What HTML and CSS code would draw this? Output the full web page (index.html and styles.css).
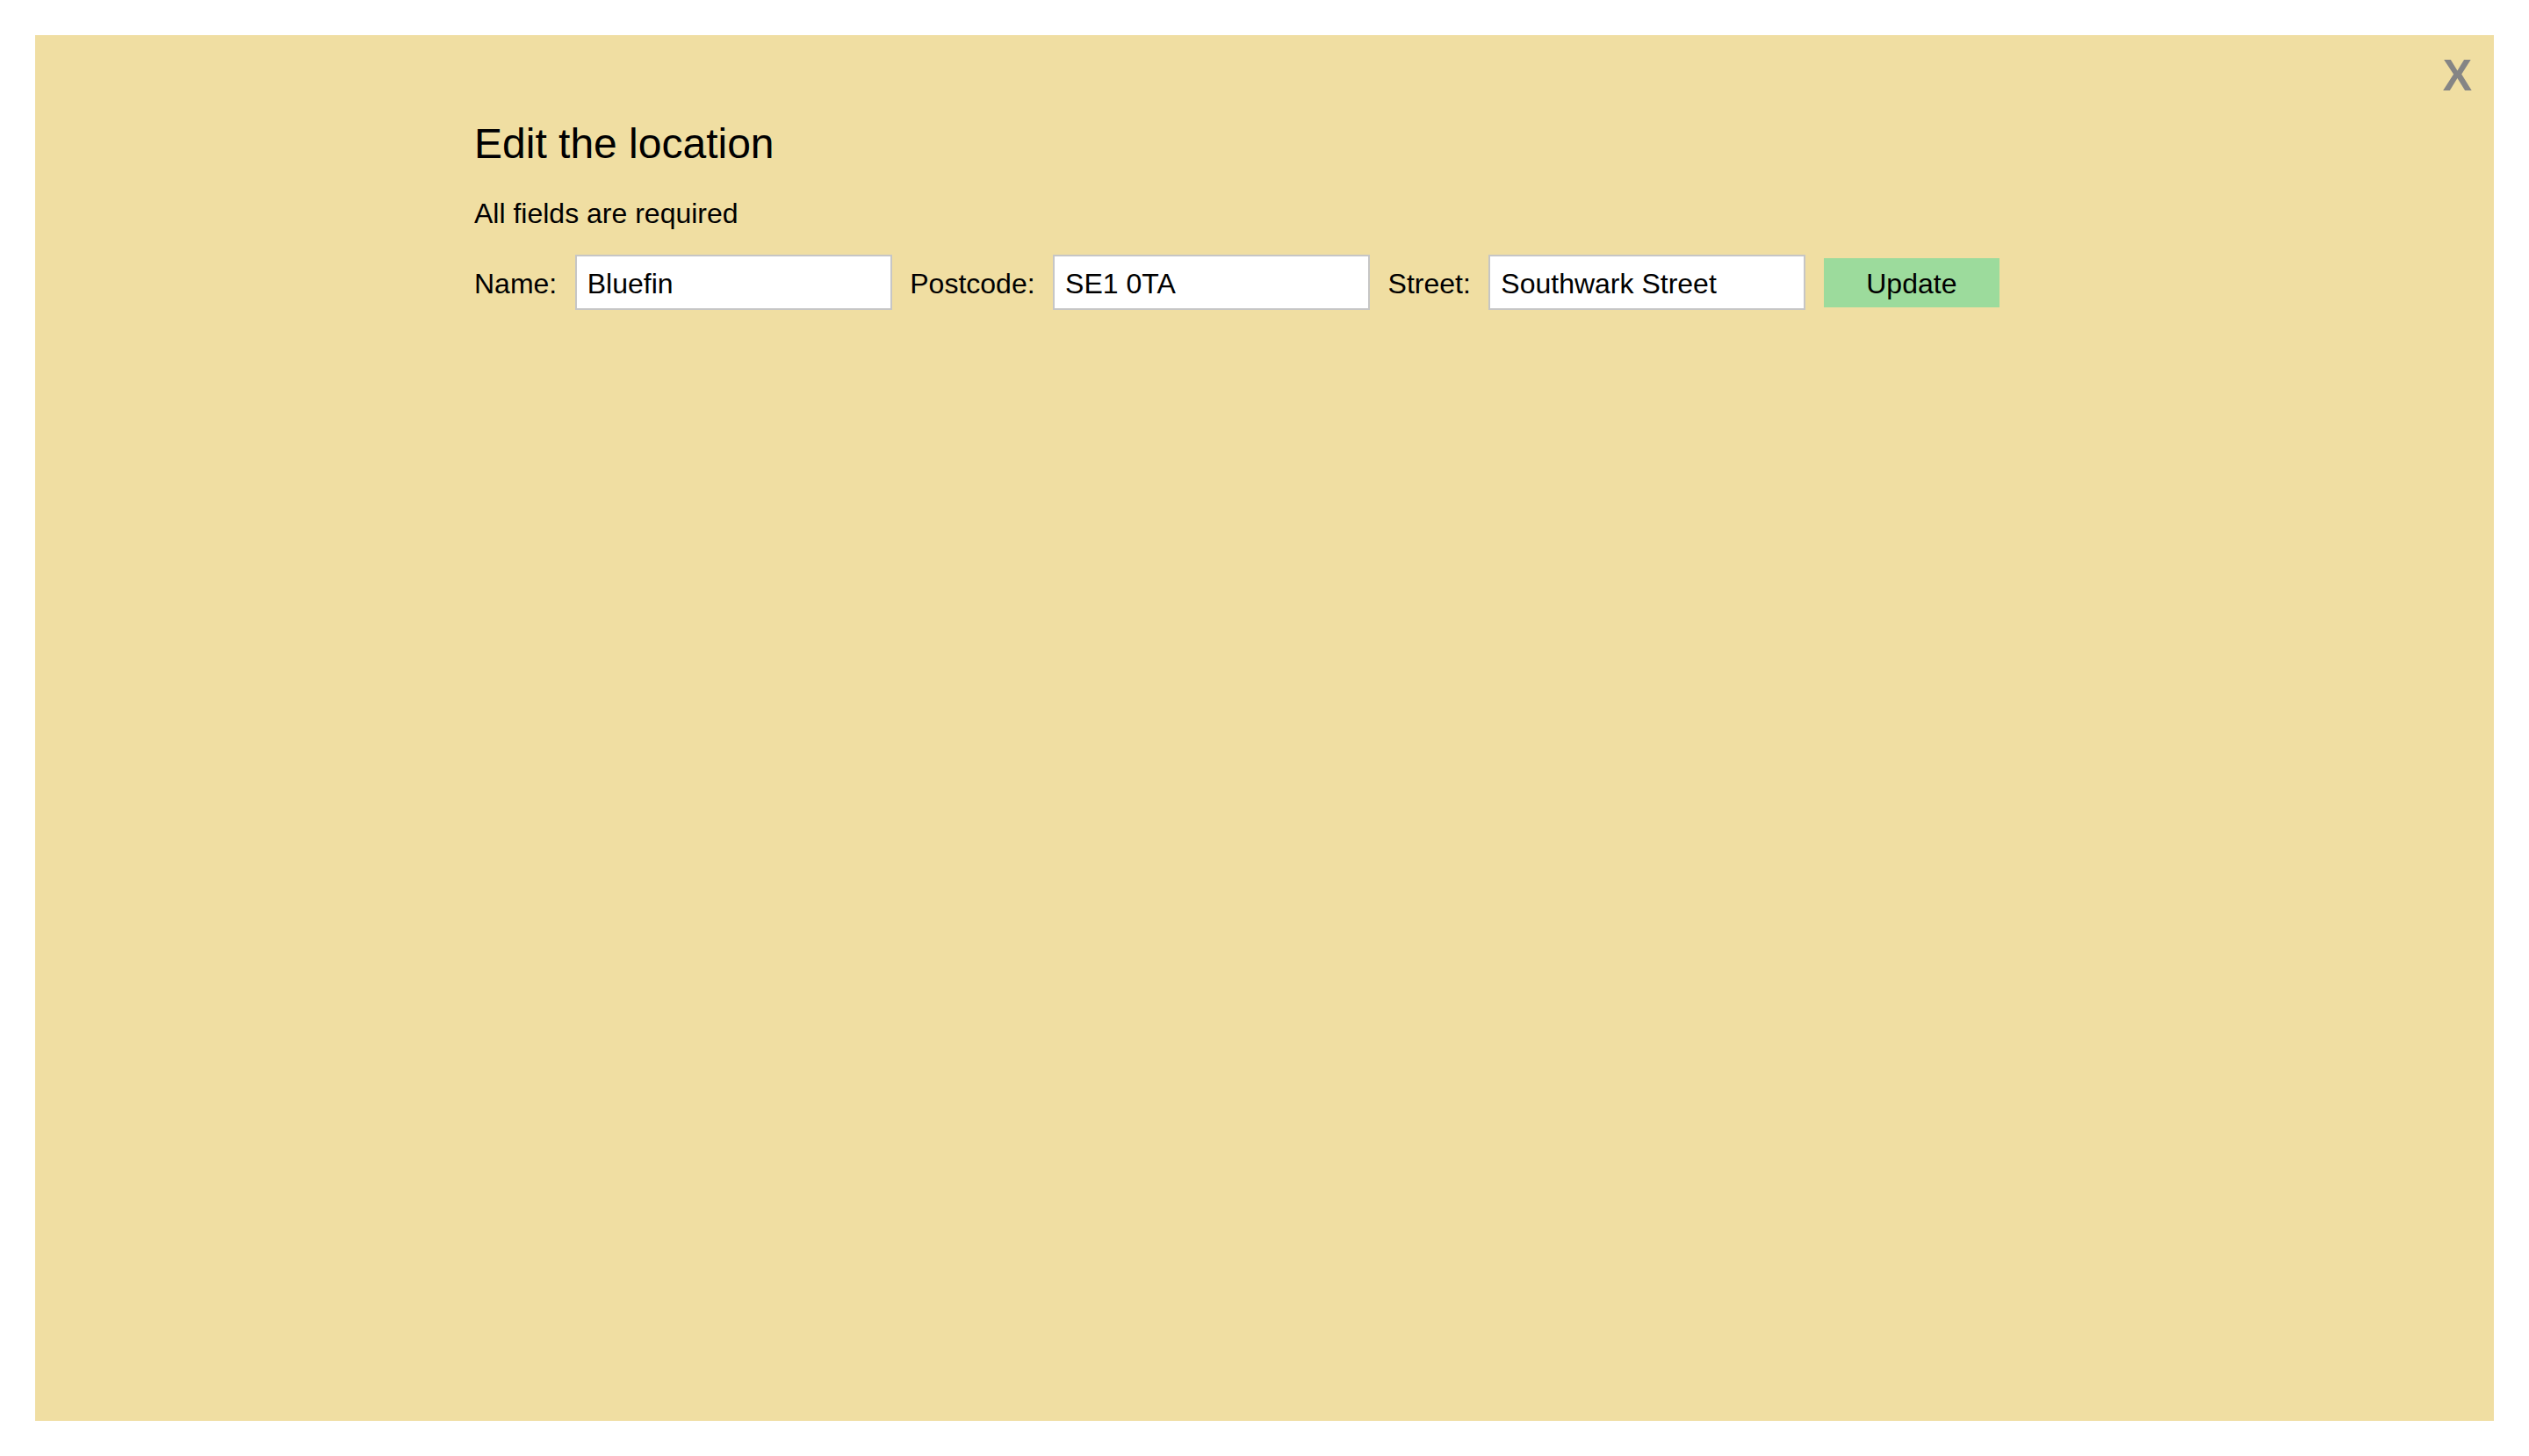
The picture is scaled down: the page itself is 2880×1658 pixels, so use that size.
FILE: index.html
```html
<!DOCTYPE html>
<html lang="en">
<head>
<meta charset="utf-8">
<title>Edit the location</title>
<link rel="stylesheet" href="styles.css">
</head>
<body>
<div class="overlay">
  <div class="panel">
    <span class="close">X</span>
    <h2 class="title">Edit the location</h2>
    <p class="note">All fields are required</p>
    <form class="row">
      <label class="label" for="name">Name:</label>
      <input class="field" id="name" type="text" value="Bluefin">
      <label class="label" for="postcode">Postcode:</label>
      <input class="field" id="postcode" type="text" value="SE1 0TA">
      <label class="label" for="street">Street:</label>
      <input class="field" id="street" type="text" value="Southwark Street">
      <button class="update" type="button">Update</button>
    </form>
  </div>
</div>
</body>
</html>
```

FILE: styles.css
```css
html, body {
  margin: 0;
  padding: 0;
  background: #ffffff;
}

body {
  font-family: "Liberation Sans", Arial, Helvetica, sans-serif;
  color: #000000;
}

.overlay {
  box-sizing: border-box;
  width: 2880px;
  height: 1658px;
  padding: 40px;
}

.panel {
  position: relative;
  box-sizing: border-box;
  height: 1578px;
  background: #f0dea2;
  padding: 96px 0 0 500px;
}

.close {
  position: absolute;
  top: 21px;
  right: 25px;
  font-size: 50px;
  font-weight: bold;
  line-height: 1;
  color: #858585;
}

.title {
  margin: 0;
  font-size: 48px;
  font-weight: normal;
  line-height: normal;
}

.note {
  margin: 34px 0 0 0;
  font-size: 32px;
  line-height: normal;
}

.row {
  display: flex;
  align-items: center;
  gap: 20.5px;
  margin: 28px 0 0 0;
  height: 63px;
}

.label {
  font-size: 32px;
  line-height: normal;
  padding-top: 3px;
}

.field {
  box-sizing: border-box;
  width: 361px;
  height: 63px;
  margin: 0;
  padding: 3px 13px 0 12px;
  border: 2px solid #c6c6c6;
  background: #ffffff;
  font-family: "Liberation Sans", Arial, Helvetica, sans-serif;
  font-size: 32px;
  color: #000000;
  outline: none;
}

.update {
  box-sizing: border-box;
  width: 200px;
  height: 56px;
  margin: 0;
  padding: 3px 0 0 0;
  border: none;
  background: #9cdb9c;
  font-family: "Liberation Sans", Arial, Helvetica, sans-serif;
  font-size: 32px;
  color: #000000;
}
```
